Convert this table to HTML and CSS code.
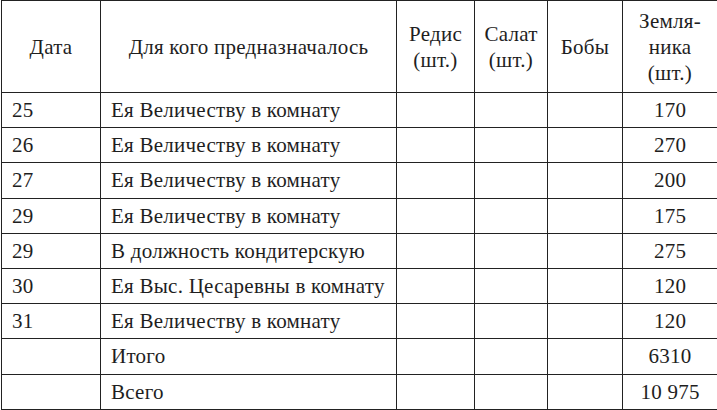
FILE: index.html
```html
<!DOCTYPE html>
<html lang="ru">
<head>
<meta charset="utf-8">
<link rel="stylesheet" href="styles.css">
</head>
<body>
<table class="ledger">
  <colgroup>
    <col class="c-date"><col class="c-who"><col class="c-rad"><col class="c-sal"><col class="c-bob"><col class="c-str">
  </colgroup>
  <thead>
    <tr>
      <th>Дата</th>
      <th>Для кого предназначалось</th>
      <th>Редис<br>(шт.)</th>
      <th>Салат<br>(шт.)</th>
      <th>Бобы</th>
      <th>Земля-<br>ника<br>(шт.)</th>
    </tr>
  </thead>
  <tbody>
    <tr><td>25</td><td>Ея Величеству в комнату</td><td></td><td></td><td></td><td class="num">170</td></tr>
    <tr><td>26</td><td>Ея Величеству в комнату</td><td></td><td></td><td></td><td class="num">270</td></tr>
    <tr><td>27</td><td>Ея Величеству в комнату</td><td></td><td></td><td></td><td class="num">200</td></tr>
    <tr><td>29</td><td>Ея Величеству в комнату</td><td></td><td></td><td></td><td class="num">175</td></tr>
    <tr><td>29</td><td>В должность кондитерскую</td><td></td><td></td><td></td><td class="num">275</td></tr>
    <tr><td>30</td><td>Ея Выс. Цесаревны в комнату</td><td></td><td></td><td></td><td class="num">120</td></tr>
    <tr><td>31</td><td>Ея Величеству в комнату</td><td></td><td></td><td></td><td class="num">120</td></tr>
    <tr><td></td><td>Итого</td><td></td><td></td><td></td><td class="num">6310</td></tr>
    <tr><td></td><td>Всего</td><td></td><td></td><td></td><td class="num">10&nbsp;975</td></tr>
  </tbody>
</table>
</body>
</html>
```

FILE: styles.css
```css
html, body {
  margin: 0;
  padding: 0;
  background: #ffffff;
}

body {
  font-family: "Liberation Serif", "DejaVu Serif", serif;
  font-size: 21px;
  letter-spacing: 0.25px;
  color: #1e1e1e;
}

.ledger {
  border-collapse: collapse;
  table-layout: fixed;
  width: 716px;
  margin-left: 1px;
}

.c-date { width: 99px; }
.c-who { width: 296px; }
.c-rad { width: 78px; }
.c-sal { width: 73px; }
.c-bob { width: 75px; }
.c-str { width: 95px; }

.ledger th,
.ledger td {
  border: 1px solid #222222;
  padding: 0 0 0 10px;
}

.ledger thead tr {
  height: 92px;
}

.ledger th {
  font-weight: normal;
  text-align: center;
  vertical-align: middle;
  line-height: 26px;
  padding: 0;
}

.ledger tbody tr {
  height: 35.2px;
}

.ledger td {
  text-align: left;
  vertical-align: middle;
  line-height: 22px;
}

.ledger td.num {
  text-align: center;
  padding: 0;
}
```
